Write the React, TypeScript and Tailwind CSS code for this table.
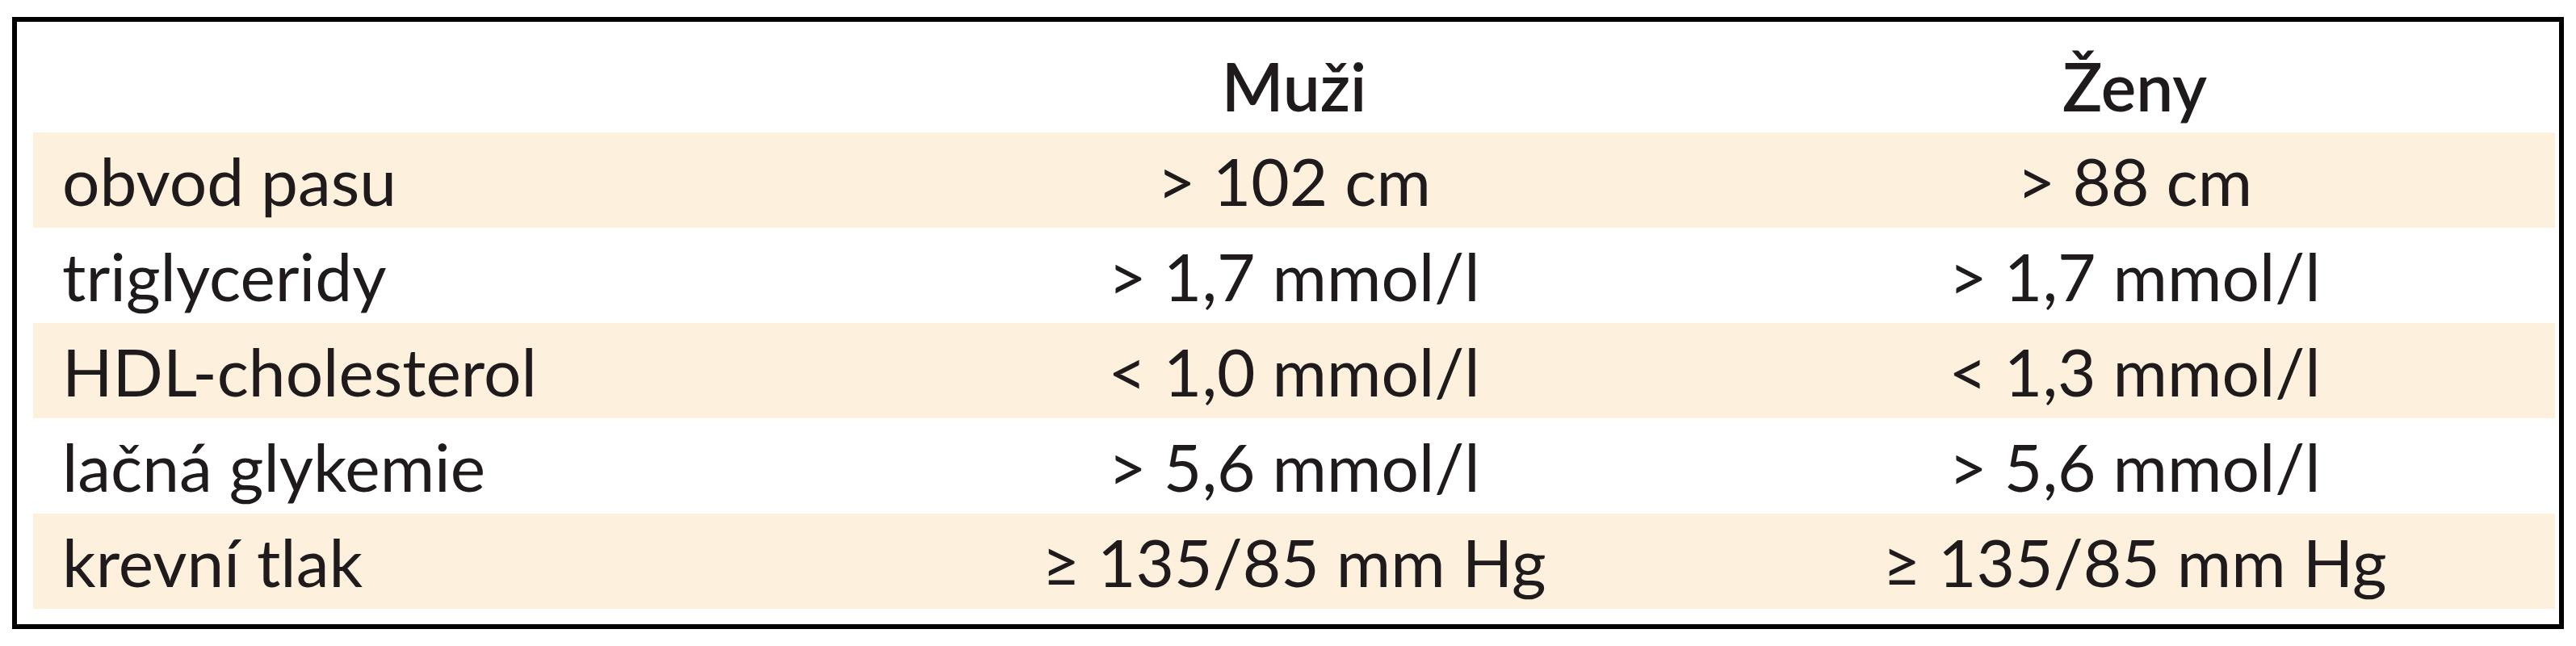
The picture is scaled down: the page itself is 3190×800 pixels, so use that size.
const rows = [
  { label: "obvod pasu", men: "> 102 cm", women: "> 88 cm" },
  { label: "triglyceridy", men: "> 1,7 mmol/l", women: "> 1,7 mmol/l" },
  { label: "HDL-cholesterol", men: "< 1,0 mmol/l", women: "< 1,3 mmol/l" },
  { label: "lačná glykemie", men: "> 5,6 mmol/l", women: "> 5,6 mmol/l" },
  { label: "krevní tlak", men: "≥ 135/85 mm Hg", women: "≥ 135/85 mm Hg" },
];

export default function App() {
  return (
    <div className="w-[3190px] h-[800px] bg-white pt-[21px] pl-[15px] font-['Lato','Liberation_Sans',sans-serif] text-[82px] leading-none text-[#1f1b1c]">
      {/* Table frame */}
      <div className="w-[3160px] h-[758px] border-[6px] border-black pl-[20px] pr-[5px]">
        {/* Header */}
        <div className="grid grid-cols-3 h-[137px] pt-[20px] items-center font-semibold">
          <div />
          <div className="text-center">Muži</div>
          <div className="text-center">Ženy</div>
        </div>

        {/* Rows */}
        {rows.map((row, i) => (
          <div
            key={row.label}
            className={`grid grid-cols-3 h-[118px] items-center ${i % 2 === 0 ? "bg-[#fdf0dc]" : "bg-white"}`}
          >
            <div className="pl-[36px]">{row.label}</div>
            <div className="text-center">{row.men}</div>
            <div className="text-center">{row.women}</div>
          </div>
        ))}
      </div>
    </div>
  );
}
